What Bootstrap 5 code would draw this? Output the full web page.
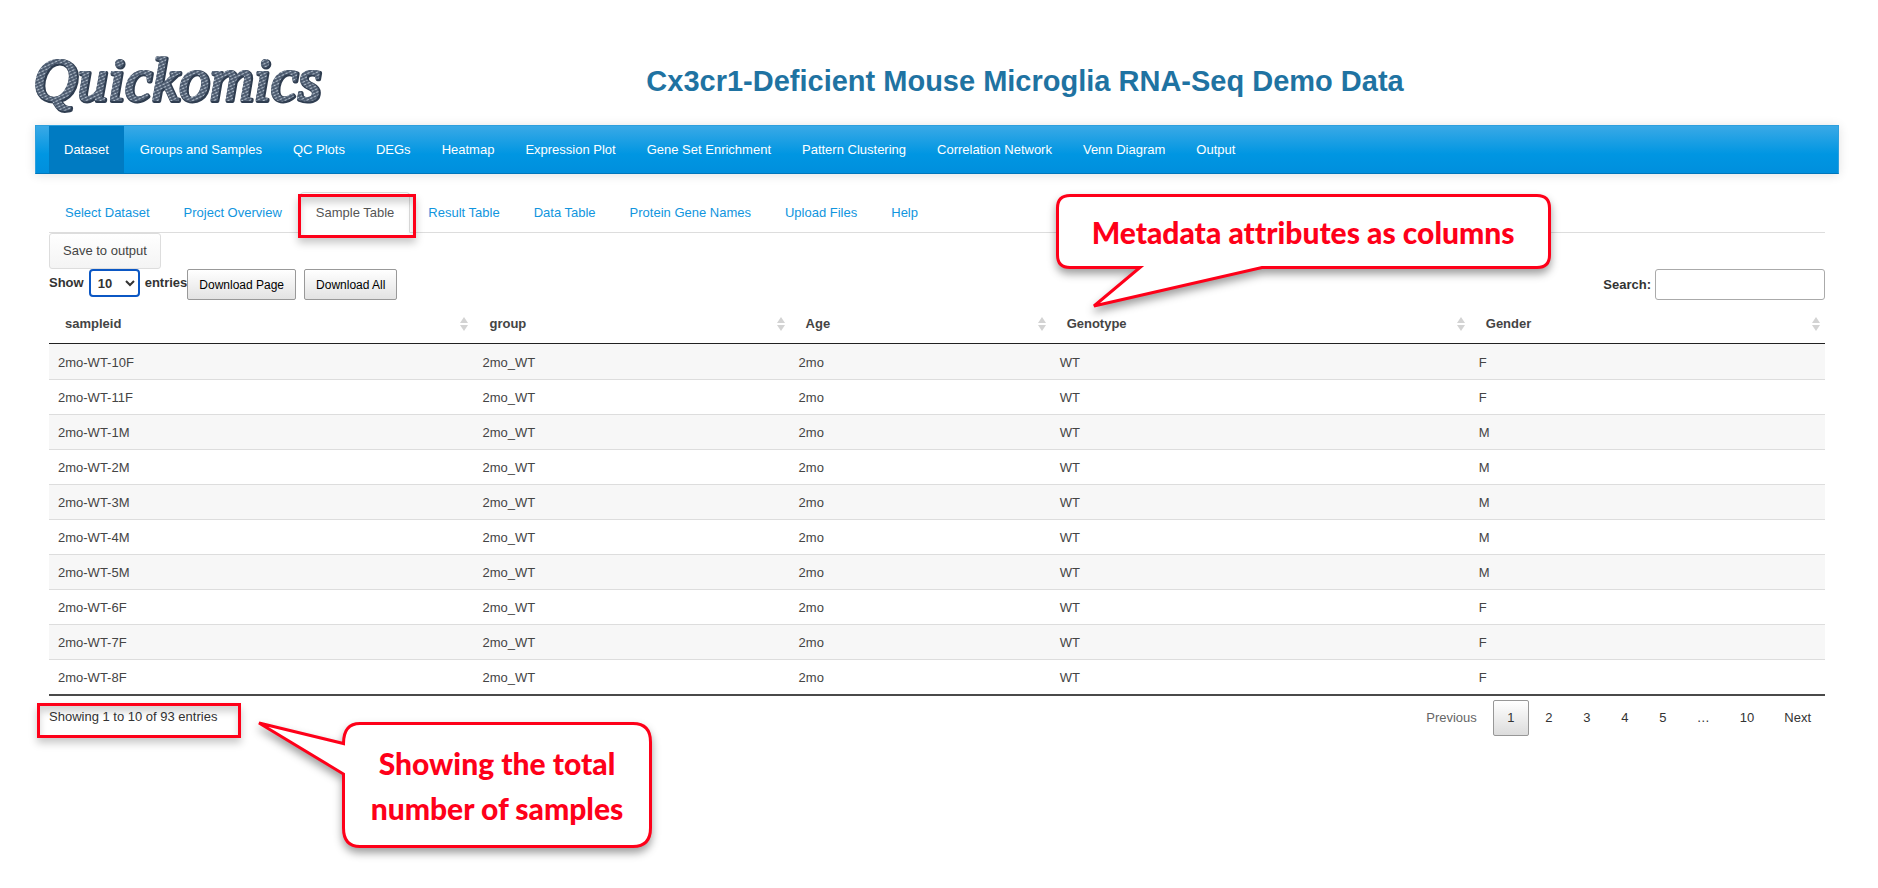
<!DOCTYPE html>
<html lang="en">
<head>
<meta charset="utf-8">
<meta name="viewport" content="width=device-width, initial-scale=1">
<title>Quickomics</title>
<link rel="stylesheet" href="https://cdn.jsdelivr.net/npm/bootstrap@5.3.0/dist/css/bootstrap.min.css">
<style>
body { font-family: "Liberation Sans", Arial, sans-serif; font-size: 13px; line-height: 18px; color: #333; background: #fff; }
.page { padding: 40px 39px 24px 35px; }
.brand-row { height: 85px; }
.logo-art { display: block; width: 292px; height: 80px; overflow: visible; }
.page-title { font-size: 29px; line-height: 34px; font-weight: 700; color: #1f73a2; margin: 24px 0 0; padding-left: 10px; }
.main-bar { padding: 0 13px; background: linear-gradient(#3aa9e6, #0096e2 60%, #008fdd); border: 1px solid #2d9fdd; border-bottom-color: #0076bb; box-shadow: 0 1px 10px rgba(0,0,0,.12); }
.main-bar .nav { gap: 1px; }
.main-bar .nav-link { color: #fff; padding: 15px 15px 14px; line-height: 18px; }
.main-bar .nav-link.active { background: #007bc2; }
.content-area { padding: 18px 14px 140px; }
.sub-tabs { border-bottom: 1px solid #ddd; }
.sub-tabs .nav-link { color: #1195de; padding: 11px 15px 10px; line-height: 18px; margin-right: 2px; border-radius: 4px 4px 0 0; }
.sub-tabs .nav-link.active { color: #555; border-color: #ddd #ddd #fff; }
.marked { position: relative; }
.marked::after { content: ""; position: absolute; border: 3px solid #fe0019; box-shadow: 0 5px 8px rgba(0,0,0,.22), inset 0 6px 7px rgba(0,0,0,.17); pointer-events: none; }
.mark-tab::after { inset: 2px -4px -6px -2px; }
.mark-info::after { inset: -5px -24px -12px -12px; }
.btn-save { font-size: 13px; line-height: 18px; padding: 8px 13px; color: #444; border: 1px solid #ddd; border-radius: 3px; background: linear-gradient(#fff, #f4f4f4); }
.len-select { height: 28px; width: 51px; padding: 0 0 0 3px; margin: 0 5px; font-weight: 700; font-size: 13px; color: #333; background: #fff; border: 2px solid #0b57c4; border-radius: 4px; }
.btn-dl { height: 31px; font-size: 12px; line-height: 18px; color: #000; padding: 0 11px; border: 1px solid #999; border-radius: 2px; background: linear-gradient(#fff, #e3e3e3); }
.search-box { width: 170px; height: 31px; border: 1px solid #aaa; border-radius: 3px; margin-left: 4px; }
.sample-table { width: 100%; table-layout: fixed; border-collapse: separate; border-spacing: 0; border-bottom: 2px solid #4a4a4a; }
.sample-table th { padding: 15px 5px 10px 16px; line-height: 18px; color: #444; border-bottom: 1px solid #222; position: relative; }
.sample-table td { padding: 9px 9px 7px; line-height: 18px; border-top: 1px solid #ddd; color: #444; }
.sample-table tbody tr:first-child td { border-top-color: transparent; }
.sample-table tbody tr:nth-child(odd) { background: #f7f7f7; }
.c1 { width: 23.9%; } .c2 { width: 17.8%; } .c3 { width: 14.7%; } .c4 { width: 23.6%; }
.sorter { width: 8px; height: 14px; fill: #d3d3d3; }
.pager { gap: 2px; }
.pager a { min-width: 36px; text-align: center; padding: 8px 13px; line-height: 18px; color: #333; text-decoration: none; border: 1px solid transparent; border-radius: 2px; }
.pager a.off { color: #666; }
.pager a.current { border-color: #979797; background: linear-gradient(#fff, #dcdcdc); }
.note-box { position: absolute; z-index: 5; font-family: Lato, sans-serif; font-weight: 900; font-size: 30px; line-height: 45px; font-variant-ligatures: none; color: #fe0019; text-align: center; white-space: nowrap; }
.note-box svg { position: absolute; inset: 0; overflow: visible; filter: drop-shadow(0 5px 4px rgba(0,0,0,.38)); }
.note-box path { fill: #fff; stroke: #fe0019; stroke-width: 3; }
.note-box span { position: relative; display: block; }
.note-cols { left: 5px; bottom: 33px; width: 495px; height: 116px; padding-top: 16px; }
.note-total { left: 207px; top: 24px; width: 396px; height: 128px; padding: 21px 0 0 86px; }
</style>
</head>
<body>
<div class="page min-vh-100">
  <header class="row g-0 brand-row">
    <div class="col-4">
      <svg class="logo-art" viewBox="0 0 292 80" role="img" aria-label="Quickomics">
        <defs>
          <pattern id="rope" width="4" height="3" patternUnits="userSpaceOnUse" patternTransform="rotate(-25)">
            <rect width="4" height="3" fill="#425166"/>
            <rect x="0.5" y="0.8" width="2.8" height="1.3" fill="#b4c0cd"/>
          </pattern>
        </defs>
        <g font-family="Liberation Serif, serif" font-style="italic" font-size="61" stroke-linejoin="round">
          <text x="-1" y="61" fill="#2f3d50" stroke="#2f3d50" stroke-width="4" aria-hidden="true">Quickomics</text>
          <text x="-2" y="60" fill="url(#rope)" stroke="url(#rope)" stroke-width="2">Quickomics</text>
        </g>
      </svg>
    </div>
    <div class="col-8"><h1 class="page-title">Cx3cr1-Deficient Mouse Microglia RNA-Seq Demo Data</h1></div>
  </header>

  <nav class="main-bar">
    <ul class="nav">
      <li class="nav-item"><a class="nav-link active" href="#">Dataset</a></li>
      <li class="nav-item"><a class="nav-link" href="#">Groups and Samples</a></li>
      <li class="nav-item"><a class="nav-link" href="#">QC Plots</a></li>
      <li class="nav-item"><a class="nav-link" href="#">DEGs</a></li>
      <li class="nav-item"><a class="nav-link" href="#">Heatmap</a></li>
      <li class="nav-item"><a class="nav-link" href="#">Expression Plot</a></li>
      <li class="nav-item"><a class="nav-link" href="#">Gene Set Enrichment</a></li>
      <li class="nav-item"><a class="nav-link" href="#">Pattern Clustering</a></li>
      <li class="nav-item"><a class="nav-link" href="#">Correlation Network</a></li>
      <li class="nav-item"><a class="nav-link" href="#">Venn Diagram</a></li>
      <li class="nav-item"><a class="nav-link" href="#">Output</a></li>
    </ul>
  </nav>

  <main class="content-area">
    <ul class="nav nav-tabs sub-tabs">
      <li class="nav-item"><a class="nav-link" href="#">Select Dataset</a></li>
      <li class="nav-item"><a class="nav-link" href="#">Project Overview</a></li>
      <li class="nav-item marked mark-tab"><a class="nav-link active" href="#">Sample Table</a></li>
      <li class="nav-item"><a class="nav-link" href="#">Result Table</a></li>
      <li class="nav-item"><a class="nav-link" href="#">Data Table</a></li>
      <li class="nav-item"><a class="nav-link" href="#">Protein Gene Names</a></li>
      <li class="nav-item"><a class="nav-link" href="#">Upload Files</a></li>
      <li class="nav-item"><a class="nav-link" href="#">Help</a></li>
    </ul>
    <button type="button" class="btn btn-save d-block">Save to output</button>

    <div class="d-flex justify-content-between">
      <div class="d-flex align-items-start">
        <label class="fw-bold d-flex align-items-center">Show
          <select class="len-select"><option>10</option><option>25</option><option>50</option></select>
          entries</label>
        <div class="d-flex gap-2">
          <button type="button" class="btn-dl">Download Page</button>
          <button type="button" class="btn-dl">Download All</button>
        </div>
      </div>
      <label class="fw-bold d-flex align-items-center">Search:<input type="search" class="search-box"></label>
    </div>

    <table class="sample-table">
      <colgroup><col class="c1"><col class="c2"><col class="c3"><col class="c4"><col></colgroup>
      <thead>
        <tr>
          <th scope="col"><div class="d-flex justify-content-between align-items-center">sampleid <svg class="sorter" viewBox="0 0 8 14"><path d="M4 0l4 6H0zM4 14l4-6H0z"/></svg></div></th>
          <th scope="col"><div class="d-flex justify-content-between align-items-center">group <svg class="sorter" viewBox="0 0 8 14"><path d="M4 0l4 6H0zM4 14l4-6H0z"/></svg></div></th>
          <th scope="col"><div class="d-flex justify-content-between align-items-center">Age <svg class="sorter" viewBox="0 0 8 14"><path d="M4 0l4 6H0zM4 14l4-6H0z"/></svg></div></th>
          <th scope="col"><div class="d-flex justify-content-between align-items-center">Genotype <svg class="sorter" viewBox="0 0 8 14"><path d="M4 0l4 6H0zM4 14l4-6H0z"/></svg></div>
            <div class="note-box note-cols">
              <svg width="495" height="116" viewBox="0 0 495 116"><path d="M14 1.5H481Q493.500 1.500 493.500 14V61Q493.500 73.500 481 73.500H206L38 112L84 73.500H14Q1.500 73.500 1.500 61V14Q1.500 1.500 14 1.500Z"/></svg>
              <span>Metadata attributes as columns</span>
            </div>
          </th>
          <th scope="col"><div class="d-flex justify-content-between align-items-center">Gender <svg class="sorter" viewBox="0 0 8 14"><path d="M4 0l4 6H0zM4 14l4-6H0z"/></svg></div></th>
        </tr>
      </thead>
      <tbody>
        <tr><td>2mo-WT-10F</td><td>2mo_WT</td><td>2mo</td><td>WT</td><td>F</td></tr>
        <tr><td>2mo-WT-11F</td><td>2mo_WT</td><td>2mo</td><td>WT</td><td>F</td></tr>
        <tr><td>2mo-WT-1M</td><td>2mo_WT</td><td>2mo</td><td>WT</td><td>M</td></tr>
        <tr><td>2mo-WT-2M</td><td>2mo_WT</td><td>2mo</td><td>WT</td><td>M</td></tr>
        <tr><td>2mo-WT-3M</td><td>2mo_WT</td><td>2mo</td><td>WT</td><td>M</td></tr>
        <tr><td>2mo-WT-4M</td><td>2mo_WT</td><td>2mo</td><td>WT</td><td>M</td></tr>
        <tr><td>2mo-WT-5M</td><td>2mo_WT</td><td>2mo</td><td>WT</td><td>M</td></tr>
        <tr><td>2mo-WT-6F</td><td>2mo_WT</td><td>2mo</td><td>WT</td><td>F</td></tr>
        <tr><td>2mo-WT-7F</td><td>2mo_WT</td><td>2mo</td><td>WT</td><td>F</td></tr>
        <tr><td>2mo-WT-8F</td><td>2mo_WT</td><td>2mo</td><td>WT</td><td>F</td></tr>
      </tbody>
    </table>

    <div class="d-flex justify-content-between align-items-start position-relative pt-1">
      <div class="marked mark-info mt-2">Showing 1 to 10 of 93 entries</div>
      <nav class="pager d-flex" aria-label="Table pages">
        <a href="#" class="off">Previous</a><a href="#" class="current">1</a><a href="#">2</a><a href="#">3</a><a href="#">4</a><a href="#">5</a><a href="#">…</a><a href="#">10</a><a href="#">Next</a>
      </nav>
      <div class="note-box note-total">
        <svg width="396" height="128" viewBox="0 0 396 128"><path d="M104 3.500H377Q394.500 3.500 394.500 22V108Q394.500 126.500 377 126.500H104Q87.500 126.500 87.500 108V54L3 3L87.500 23.500Q87.500 3.500 104 3.500Z"/></svg>
        <span>Showing the total<br>number of samples</span>
      </div>
    </div>
  </main>
</div>
<script src="https://cdn.jsdelivr.net/npm/bootstrap@5.3.0/dist/js/bootstrap.bundle.min.js"></script>
</body>
</html>
